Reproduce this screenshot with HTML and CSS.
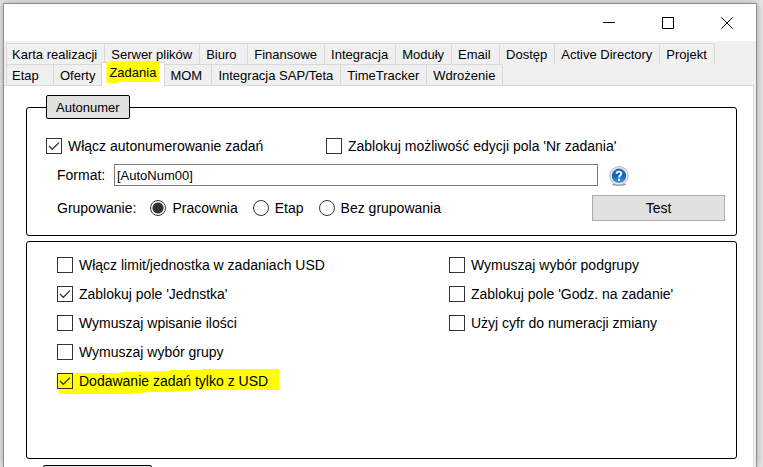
FILE: index.html
```html
<!DOCTYPE html>
<html lang="pl">
<head>
  <meta charset="UTF-8" />
  <meta name="viewport" content="width=device-width, initial-scale=1.0" />
  <title>Zadania</title>
  <link rel="stylesheet" href="styles.css">
</head>
<body>
  <div class="window">
    <header class="titlebar">
      <button class="win-btn" aria-label="Minimalizuj">
        <svg width="12" height="12" viewBox="0 0 12 12"><path d="M0 5.5H12" /></svg>
      </button>
      <button class="win-btn" aria-label="Maksymalizuj">
        <svg width="12" height="12" viewBox="0 0 12 12"><path d="M.5 .5H11.5V11.5H.5Z" /></svg>
      </button>
      <button class="win-btn" aria-label="Zamknij">
        <svg width="12" height="12" viewBox="0 0 12 12"><path d="M.3 .3L11.7 11.7M11.7 .3L.3 11.7" /></svg>
      </button>
    </header>

    <nav class="tabs">
      <div class="tab-row">
        <button class="tab">Karta realizacji</button>
        <button class="tab">Serwer plików</button>
        <button class="tab">Biuro</button>
        <button class="tab">Finansowe</button>
        <button class="tab">Integracja</button>
        <button class="tab">Moduły</button>
        <button class="tab">Email</button>
        <button class="tab">Dostęp</button>
        <button class="tab">Active Directory</button>
        <button class="tab">Projekt</button>
      </div>
      <div class="tab-row">
        <button class="tab">Etap</button>
        <button class="tab">Oferty</button>
        <button class="tab selected"><span class="marker marker-tab">Zadania</span></button>
        <button class="tab">MOM</button>
        <button class="tab">Integracja SAP/Teta</button>
        <button class="tab">TimeTracker</button>
        <button class="tab">Wdrożenie</button>
      </div>
    </nav>

    <main class="page">
      <fieldset class="group autonumber">
        <legend>Autonumer</legend>
        <div class="switches">
          <label class="option"><input type="checkbox" checked>Włącz autonumerowanie zadań</label>
          <label class="option"><input type="checkbox">Zablokuj możliwość edycji pola 'Nr zadania'</label>
        </div>
        <div class="format">
          <label for="format">Format:</label>
          <input type="text" id="format" value="[AutoNum00]">
          <button class="help" aria-label="Pomoc">
            <svg width="20" height="20" viewBox="0 0 20 20">
              <defs>
                <linearGradient id="ball" x1="0" y1="0" x2="0" y2="1">
                  <stop offset="0" stop-color="#2a6fc0" />
                  <stop offset=".5" stop-color="#1462bd" />
                  <stop offset="1" stop-color="#38a0ee" />
                </linearGradient>
              </defs>
              <ellipse cx="10" cy="18.6" rx="7" ry="1.4" fill="#999" />
              <circle cx="10" cy="9.8" r="9.2" fill="#ececec" stroke="#b4b4b4" />
              <circle cx="10" cy="9.8" r="7.2" fill="url(#ball)" />
              <path d="M7.6 7.8C7.7 4.9 12.5 5 12.3 7.8C12.2 9.3 10.1 9.4 10.1 11.4" fill="none" stroke="#fff" stroke-width="1.9" />
              <circle cx="10.1" cy="13.8" r="1.2" fill="#fff" />
            </svg>
          </button>
        </div>
        <div class="grouping">
          <span id="grouping">Grupowanie:</span>
          <div class="radios" role="radiogroup" aria-labelledby="grouping">
            <label class="option"><input type="radio" name="grouping" checked>Pracownia</label>
            <label class="option"><input type="radio" name="grouping">Etap</label>
            <label class="option"><input type="radio" name="grouping">Bez grupowania</label>
          </div>
          <button class="test">Test</button>
        </div>
      </fieldset>

      <fieldset class="group settings">
        <div class="column">
          <label class="option"><input type="checkbox">Włącz limit/jednostka w zadaniach USD</label>
          <label class="option"><input type="checkbox" checked>Zablokuj pole 'Jednstka'</label>
          <label class="option"><input type="checkbox">Wymuszaj wpisanie ilości</label>
          <label class="option"><input type="checkbox">Wymuszaj wybór grupy</label>
          <label class="option marker marker-option"><input type="checkbox" checked>Dodawanie zadań tylko z USD</label>
        </div>
        <div class="column">
          <label class="option"><input type="checkbox">Wymuszaj wybór podgrupy</label>
          <label class="option"><input type="checkbox">Zablokuj pole 'Godz. na zadanie'</label>
          <label class="option"><input type="checkbox">Użyj cyfr do numeracji zmiany</label>
        </div>
      </fieldset>

      <div class="next-header"></div>
    </main>
  </div>
</body>
</html>
```
FILE: styles.css
```css
* { box-sizing: border-box; margin: 0; padding: 0; }
body {
  height: 100vh;
  overflow: hidden;
  padding: 3px 6px 0 3px;
  background: #e6e6e6;
  color: #000;
  font-family: "Liberation Sans", Arial, sans-serif;
  font-size: 14px;
}
button, input {
  font: inherit;
  color: inherit;
}
.window {
  display: flex;
  flex-direction: column;
  height: 100%;
  background: #f0f0f0;
  border: 1px solid #8c8c8c;
  border-bottom: none;
  box-shadow: 0 0 8px rgba(0,0,0,0.3);
}

/* Title bar */
.titlebar {
  display: flex;
  flex: none;
  justify-content: flex-end;
  height: 37px;
  background: #fff;
}
.win-btn {
  display: flex;
  align-items: center;
  justify-content: center;
  width: 59px;
  border: none;
  background: none;
}
.win-btn svg {
  fill: none;
  stroke: #000;
}

/* Tabs */
.tabs {
  flex: none;
  padding: 2px 2px 0;
  font-size: 13px;
}
.tab-row {
  display: flex;
  height: 21px;
}
.tab {
  min-width: 48px;
  padding: 0 7px 0 6px;
  border: 1px solid #d9d9d9;
  border-width: 1px 1px 0 0;
  background: #f0f0f0;
  text-align: left;
  white-space: nowrap;
}
.tab:first-child {
  padding-left: 5px;
  border-left-width: 1px;
}
.tab.selected {
  position: relative;
  z-index: 1;
  margin: -2px -1px -1px -2px;
  padding: 0 8px 4px 7px;
  border-left-width: 1px;
  background: #fff;
}

/* Yellow highlighter strokes */
.marker {
  position: relative;
  z-index: 0;
}
.marker::before {
  content: "";
  position: absolute;
  z-index: -1;
  background: #ff0;
}
.marker-tab::before {
  inset: -4px -3px -3px -3px;
  clip-path: polygon(0 1px, 7% 1px, 7% 0, 100% 0, 100% 95%, 22% 95%, 22% 100%, 0 100%);
}
.marker-option::before {
  inset: -4px -11px -5px 2px;
  clip-path: polygon(0 16%, 28% 16%, 28% 12%, 50% 8%, 50% 4%, 65% 4%, 65% 0, 100% 0, 100% 84%, 61% 84%, 61% 89%, 39% 93%, 39% 96%, 32% 100%, 0 100%);
}

/* Tab page */
.page {
  flex: 1;
  min-height: 0;
  overflow: hidden;
  margin-right: 2px;
  padding: 9px 16px 0 22px;
  border: 1px solid #d9d9d9;
  border-width: 1px 1px 0 0;
  background: #fff;
}
.group {
  border: 1px solid #000;
  border-radius: 3px;
}
.autonumber {
  padding: 19px 11px 14px 19px;
}
legend, .next-header {
  height: 24px;
  border: 1px solid #000;
  border-radius: 2px;
  background: #e1e1e1;
}
legend {
  padding: 0 9px;
  font-size: 13px;
  line-height: 24px;
}
.next-header {
  width: 109px;
  margin: 6px 0 0 17px;
}

/* Check boxes and radio buttons */
.option {
  display: flex;
  align-items: center;
  gap: 6px;
  height: 16px;
  white-space: nowrap;
}
.option input {
  appearance: none;
  flex: none;
  width: 16px;
  height: 16px;
  border: 1px solid #333;
  background: #fff;
}
.option input[type="checkbox"]:checked {
  background: url("data:image/svg+xml,%3Csvg xmlns='http://www.w3.org/2000/svg' viewBox='0 0 14 14'%3E%3Cpath d='M2 7L5.3 10.3L12 3.6' fill='none' stroke='%23333' stroke-width='1.3'/%3E%3C/svg%3E") center / 14px 14px no-repeat;
}
.marker-option input[type="checkbox"]:checked {
  background-color: #ff0;
}
.option input[type="radio"] {
  border-radius: 50%;
}
.option input[type="radio"]:checked {
  background: radial-gradient(circle, #333 5px, #fff 6px);
}

/* Autonumer */
.switches {
  display: grid;
  grid-template-columns: 280px 1fr;
}
.format {
  display: flex;
  align-items: center;
  gap: 11px;
  margin: 10px 96px 0 11px;
}
.format label {
  width: 46px;
}
.format input {
  flex: 1;
  min-width: 0;
  height: 22px;
  padding: 0 2px;
  border: 1px solid #7a7a7a;
  font-size: 13px;
}
.help {
  display: flex;
  align-self: flex-end;
  border: none;
  background: none;
}
.grouping {
  display: flex;
  align-items: center;
  gap: 14px;
  margin: 9px 0 0 11px;
}
.radios {
  display: flex;
  flex: 1;
  gap: 15px;
}
.test {
  width: 133px;
  height: 26px;
  border: 1px solid #adadad;
  background: #e1e1e1;
}

/* Task settings */
.settings {
  display: grid;
  grid-template-columns: 392px 1fr;
  align-items: start;
  height: 218px;
  margin-top: 5px;
  padding: 15px 30px;
}
.column {
  display: grid;
  justify-items: start;
  gap: 13px;
}
```
